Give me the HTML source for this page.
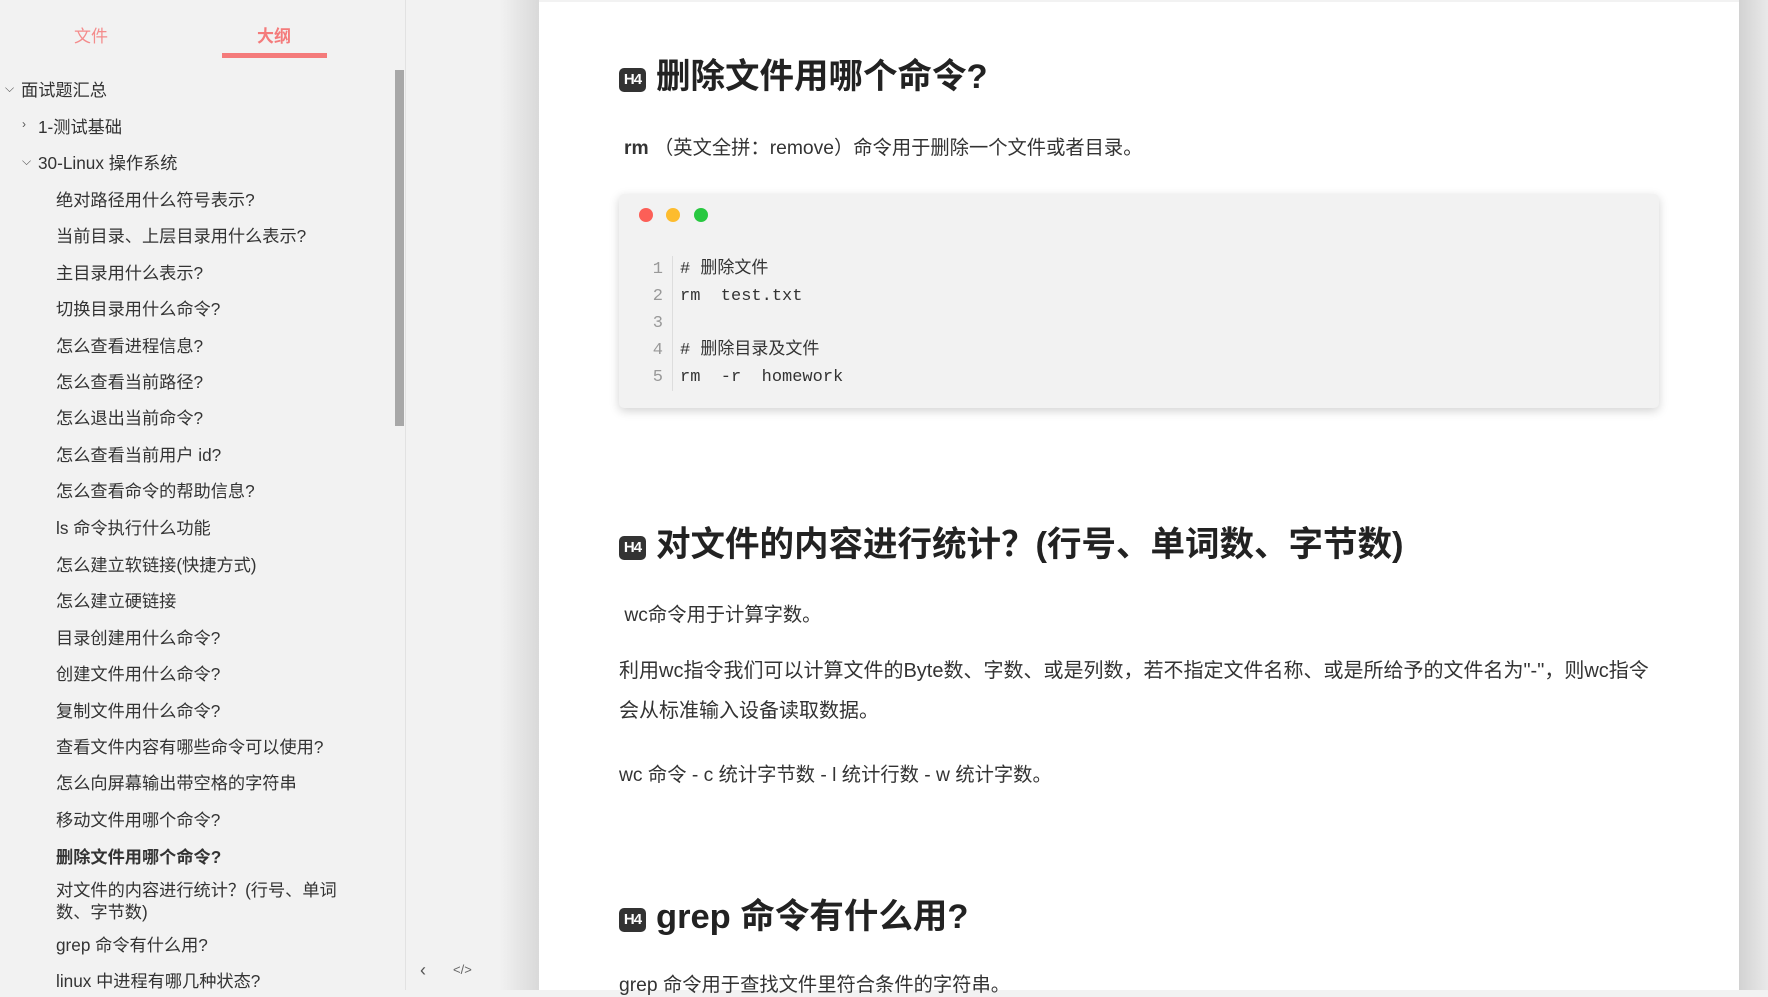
<!DOCTYPE html>
<html><head><meta charset="utf-8"><style>
*{margin:0;padding:0;box-sizing:border-box}
body{width:1768px;height:990px;overflow:hidden;background:#f2f2f2;font-family:"Liberation Sans","Noto Sans CJK SC",sans-serif;color:#333;position:relative}
.a{position:absolute;white-space:nowrap}
#side{position:absolute;left:0;top:0;width:406px;height:990px;background:#f2f2f2;border-right:1px solid #e2e2e2}
.t{position:absolute;font-size:17.2px;color:#333;line-height:20px;white-space:nowrap}
.chev{position:absolute;font-size:12px;color:#555}
#gap{position:absolute;left:406px;top:0;width:133px;height:990px;background:linear-gradient(to right,#f2f2f2 0,#f2f2f2 70%,#d9d9d9 100%)}
#main{position:absolute;left:539px;top:2px;width:1200px;height:988px;background:#fff}
#rg{position:absolute;left:1739px;top:0;width:29px;height:990px;background:linear-gradient(to right,#d2d2d2,#e9e9e9)}
.h{position:absolute;font-size:34.5px;font-weight:bold;color:#222;white-space:nowrap;line-height:40px}
.badge{display:inline-block;width:27px;height:24px;background:#333;color:#fff;border-radius:5px;font-size:15px;line-height:24px;text-align:center;vertical-align:4px;margin-right:10px;font-weight:bold;letter-spacing:-1px}
.p{position:absolute;font-size:19.3px;color:#333;white-space:nowrap}
.code{position:absolute;left:619px;top:194px;width:1040px;height:214px;background:#f2f2f2;border-radius:5px;box-shadow:0 3px 10px rgba(0,0,0,.18)}
.dot{position:absolute;top:14px;width:14px;height:14px;border-radius:50%}
.ln{position:absolute;left:30px;width:14px;text-align:right;color:#999;font-family:"Liberation Mono",monospace;font-size:17px;line-height:20px}
.cl{position:absolute;left:61px;font-family:"Liberation Mono","Noto Sans CJK SC",monospace;font-size:17px;color:#333;white-space:pre;line-height:20px}
</style></head><body>
<div id="side">
<div class="a" style="left:74px;top:22px;font-size:17px;color:#f48c8c">文件</div>
<div class="a" style="left:257px;top:22px;font-size:17px;color:#f47b7b;font-weight:bold">大纲</div>
<div style="position:absolute;left:222px;top:53px;width:105px;height:5px;background:#f47b7b"></div>
<div style="position:absolute;left:395px;top:70px;width:9px;height:356px;background:#a8a8a8"></div>
<span class="chev" style="left:5px;top:81px">⌵</span><div class="t" style="left:21px;top:80px">面试题汇总</div>
<span class="chev" style="left:22px;top:117px">›</span><div class="t" style="left:38px;top:117px">1-测试基础</div>
<span class="chev" style="left:22px;top:154px">⌵</span><div class="t" style="left:38px;top:153px">30-Linux 操作系统</div>
<div class="t" style="left:56px;top:190px">绝对路径用什么符号表示?</div>
<div class="t" style="left:56px;top:226px">当前目录、上层目录用什么表示?</div>
<div class="t" style="left:56px;top:263px">主目录用什么表示?</div>
<div class="t" style="left:56px;top:299px">切换目录用什么命令?</div>
<div class="t" style="left:56px;top:336px">怎么查看进程信息?</div>
<div class="t" style="left:56px;top:372px">怎么查看当前路径?</div>
<div class="t" style="left:56px;top:408px">怎么退出当前命令?</div>
<div class="t" style="left:56px;top:445px">怎么查看当前用户 id?</div>
<div class="t" style="left:56px;top:481px">怎么查看命令的帮助信息?</div>
<div class="t" style="left:56px;top:518px">ls 命令执行什么功能</div>
<div class="t" style="left:56px;top:555px">怎么建立软链接(快捷方式)</div>
<div class="t" style="left:56px;top:591px">怎么建立硬链接</div>
<div class="t" style="left:56px;top:628px">目录创建用什么命令?</div>
<div class="t" style="left:56px;top:664px">创建文件用什么命令?</div>
<div class="t" style="left:56px;top:701px">复制文件用什么命令?</div>
<div class="t" style="left:56px;top:737px">查看文件内容有哪些命令可以使用?</div>
<div class="t" style="left:56px;top:773px">怎么向屏幕输出带空格的字符串</div>
<div class="t" style="left:56px;top:810px">移动文件用哪个命令?</div>
<div class="t" style="left:56px;top:847px;font-weight:bold">删除文件用哪个命令?</div>
<div class="t" style="left:56px;top:880px">对文件的内容进行统计？(行号、单词</div>
<div class="t" style="left:56px;top:902px">数、字节数)</div>
<div class="t" style="left:56px;top:935px">grep 命令有什么用?</div>
<div class="t" style="left:56px;top:971px">linux 中进程有哪几种状态?</div>
</div>
<div id="gap"></div>
<div class="a" style="left:420px;top:960px;font-size:18px;color:#555">‹</div>
<div class="a" style="left:453px;top:962px;font-size:13px;color:#666">&lt;/&gt;</div>
<div id="main"></div>
<div id="rg"></div>
<div class="h" style="left:619px;top:57px"><span class="badge">H4</span>删除文件用哪个命令?</div>
<div class="p" style="left:624px;top:132px"><b>rm</b> （英文全拼：remove）命令用于删除一个文件或者目录。</div>
<div class="code">
<div class="dot" style="left:20px;background:#fc5f57"></div>
<div class="dot" style="left:47px;background:#fdbc2e"></div>
<div class="dot" style="left:75px;background:#28c840"></div>
<div style="position:absolute;left:53px;top:62px;width:1px;height:135px;background:#ddd"></div>
<div class="ln" style="top:66px">1</div><div class="cl" style="top:66px"># 删除文件</div>
<div class="ln" style="top:93px">2</div><div class="cl" style="top:93px">rm  test.txt</div>
<div class="ln" style="top:120px">3</div>
<div class="ln" style="top:147px">4</div><div class="cl" style="top:147px"># 删除目录及文件</div>
<div class="ln" style="top:174px">5</div><div class="cl" style="top:174px">rm  -r  homework</div>
</div>
<div class="h" style="left:619px;top:525px"><span class="badge">H4</span>对文件的内容进行统计？(行号、单词数、字节数)</div>
<div class="p" style="left:619px;top:599px">&nbsp;wc命令用于计算字数。</div>
<div class="p" style="left:619px;top:651px;line-height:40px;font-size:20px">利用wc指令我们可以计算文件的Byte数、字数、或是列数，若不指定文件名称、或是所给予的文件名为"-"，则wc指令<br>会从标准输入设备读取数据。</div>
<div class="p" style="left:619px;top:759px">wc 命令 - c 统计字节数 - l 统计行数 - w 统计字数。</div>
<div class="h" style="left:619px;top:897px"><span class="badge">H4</span>grep 命令有什么用?</div>
<div class="p" style="left:619px;top:969px">grep 命令用于查找文件里符合条件的字符串。</div>
</body></html>
